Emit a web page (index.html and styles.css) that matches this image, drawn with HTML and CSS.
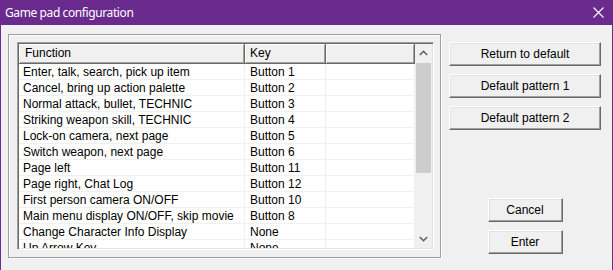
FILE: index.html
```html
<!DOCTYPE html>
<html lang="en">
<head>
    <meta charset="utf-8">
    <title>Game pad configuration</title>
    <link rel="stylesheet" href="styles.css">
</head>
<body>
    <div class="window">
        <div class="titleBar">
            <span class="titleText">Game pad configuration</span>
            <svg class="closeIcon" width="11" height="11" viewBox="0 0 11 11">
                <path d="M0.5 0.5 L10.5 10.5 M10.5 0.5 L0.5 10.5" stroke="#ffffff" stroke-width="1.1" fill="none"/>
            </svg>
        </div>

        <div class="dialogBody">
            <div class="groupBox">
                <div class="listView">
                    <div class="listMain">
                        <div class="listHeader">
                            <div class="headCell headFunction">Function</div>
                            <div class="headCell headKey">Key</div>
                            <div class="headCell"></div>
                        </div>
                        <div class="listRows">
                            <div class="row"><div class="cell cellFunction">Enter, talk, search, pick up item</div><div class="cell cellKey">Button 1</div><div class="cell"></div></div>
                            <div class="row"><div class="cell cellFunction">Cancel, bring up action palette</div><div class="cell cellKey">Button 2</div><div class="cell"></div></div>
                            <div class="row"><div class="cell cellFunction">Normal attack, bullet, TECHNIC</div><div class="cell cellKey">Button 3</div><div class="cell"></div></div>
                            <div class="row"><div class="cell cellFunction">Striking weapon skill, TECHNIC</div><div class="cell cellKey">Button 4</div><div class="cell"></div></div>
                            <div class="row"><div class="cell cellFunction">Lock-on camera, next page</div><div class="cell cellKey">Button 5</div><div class="cell"></div></div>
                            <div class="row"><div class="cell cellFunction">Switch weapon, next page</div><div class="cell cellKey">Button 6</div><div class="cell"></div></div>
                            <div class="row"><div class="cell cellFunction">Page left</div><div class="cell cellKey">Button 11</div><div class="cell"></div></div>
                            <div class="row"><div class="cell cellFunction">Page right, Chat Log</div><div class="cell cellKey">Button 12</div><div class="cell"></div></div>
                            <div class="row"><div class="cell cellFunction">First person camera ON/OFF</div><div class="cell cellKey">Button 10</div><div class="cell"></div></div>
                            <div class="row"><div class="cell cellFunction">Main menu display ON/OFF, skip movie</div><div class="cell cellKey">Button 8</div><div class="cell"></div></div>
                            <div class="row"><div class="cell cellFunction">Change Character Info Display</div><div class="cell cellKey">None</div><div class="cell"></div></div>
                            <div class="row"><div class="cell cellFunction">Up Arrow Key</div><div class="cell cellKey">None</div><div class="cell"></div></div>
                        </div>
                    </div>
                    <div class="scrollBar">
                        <div class="scrollArrow">
                            <svg width="9" height="6" viewBox="0 0 9 6"><path d="M0.8 5 L4.5 1.3 L8.2 5" stroke="#606060" stroke-width="1.6" fill="none"/></svg>
                        </div>
                        <div class="scrollTrack">
                            <div class="scrollThumb"></div>
                        </div>
                        <div class="scrollArrow">
                            <svg width="9" height="6" viewBox="0 0 9 6"><path d="M0.8 1 L4.5 4.7 L8.2 1" stroke="#606060" stroke-width="1.6" fill="none"/></svg>
                        </div>
                    </div>
                </div>
            </div>

            <div class="sideColumn">
                <div class="buttonStack">
                    <button class="winButton wideButton">Return to default</button>
                    <button class="winButton wideButton">Default pattern 1</button>
                    <button class="winButton wideButton">Default pattern 2</button>
                </div>
                <div class="buttonStack dialogButtons">
                    <button class="winButton smallButton">Cancel</button>
                    <button class="winButton smallButton">Enter</button>
                </div>
            </div>
        </div>
    </div>
</body>
</html>
```

FILE: styles.css
```css
body {
    margin: 0;
    background-color: #f0f0f0;
    font-family: "Liberation Sans", Arial, sans-serif;
    font-size: 12px;
    color: #000000;
}

.window {
    width: 613px;
    height: 270px;
    box-sizing: border-box;
    background-color: #f0f0f0;
    border-left: 1px solid #6b2a8e;
    border-right: 1px solid #6b2a8e;
    overflow: hidden;
}

/* title bar */
.titleBar {
    height: 25px;
    margin: 0 -1px;
    padding: 0 9px 0 5px;
    background-color: #6b2a8e;
    display: flex;
    align-items: center;
    justify-content: space-between;
}

.titleText {
    font-family: "Noto Sans", "Open Sans", sans-serif;
    font-size: 12px;
    letter-spacing: -0.4px;
    color: #ffffff;
    padding-bottom: 1px;
}

.closeIcon {
    display: block;
}

/* dialog content */
.dialogBody {
    display: flex;
    align-items: flex-start;
    padding: 9px 0 0 7px;
    gap: 8px;
}

.groupBox {
    width: 433px;
    height: 224px;
    box-sizing: border-box;
    border: 1px solid #a0a0a0;
    box-shadow: inset 1px 1px #ffffff, 1px 1px #ffffff;
    padding: 7px 6px 6px 8px;
}

.listView {
    height: 208px;
    box-sizing: border-box;
    border: 1px solid;
    border-color: #a0a0a0 #ffffff #ffffff #a0a0a0;
    box-shadow: inset 1px 1px #696969, inset -1px -1px #e3e3e3;
    padding: 1px;
    background-color: #ffffff;
    display: flex;
}

.listMain {
    flex: 1;
    overflow: hidden;
    display: flex;
    flex-direction: column;
}

.listHeader {
    display: grid;
    grid-template-columns: 226px 81px 1fr;
    height: 20px;
    flex: none;
}

.headCell {
    background-color: #f0f0f0;
    border-right: 1px solid #696969;
    border-bottom: 1px solid #696969;
    box-shadow: inset 1px 1px #ffffff, inset -1px -1px #a0a0a0;
    line-height: 18px;
    white-space: nowrap;
}

.headFunction {
    padding-left: 6px;
}

.headKey {
    padding-left: 5px;
}

.listRows {
    flex: 1;
    overflow: hidden;
}

.row {
    display: grid;
    grid-template-columns: 226px 81px 1fr;
    height: 16px;
    box-sizing: border-box;
    border-bottom: 1px solid #f0f0f0;
}

.cell {
    border-right: 1px solid #f0f0f0;
    line-height: 16px;
    white-space: nowrap;
    overflow: hidden;
}

.cellFunction {
    padding-left: 4px;
}

.cellKey {
    padding-left: 5px;
}

/* scroll bar */
.scrollBar {
    width: 17px;
    flex: none;
    background-color: #f0f0f0;
    display: flex;
    flex-direction: column;
}

.scrollArrow {
    height: 18px;
    display: flex;
    align-items: center;
    justify-content: center;
}

.scrollArrow svg {
    display: block;
}

.scrollTrack {
    flex: 1;
    padding: 1px 1px 0;
}

.scrollThumb {
    height: 110px;
    background-color: #cdcdcd;
}

/* buttons */
.sideColumn {
    width: 152px;
    height: 212px;
    padding-top: 8px;
    display: flex;
    flex-direction: column;
    justify-content: space-between;
}

.buttonStack {
    display: flex;
    flex-direction: column;
    align-items: center;
    gap: 8px;
}

.winButton {
    font-family: "Liberation Sans", Arial, sans-serif;
    font-size: 12px;
    color: #000000;
    background-color: #f0f0f0;
    height: 24px;
    padding: 0;
    border: 1px solid;
    border-color: #ffffff #696969 #696969 #ffffff;
    box-shadow: inset -1px -1px #a0a0a0, inset 1px 1px #e3e3e3;
}

.wideButton {
    width: 152px;
}

.smallButton {
    width: 75px;
}
```
